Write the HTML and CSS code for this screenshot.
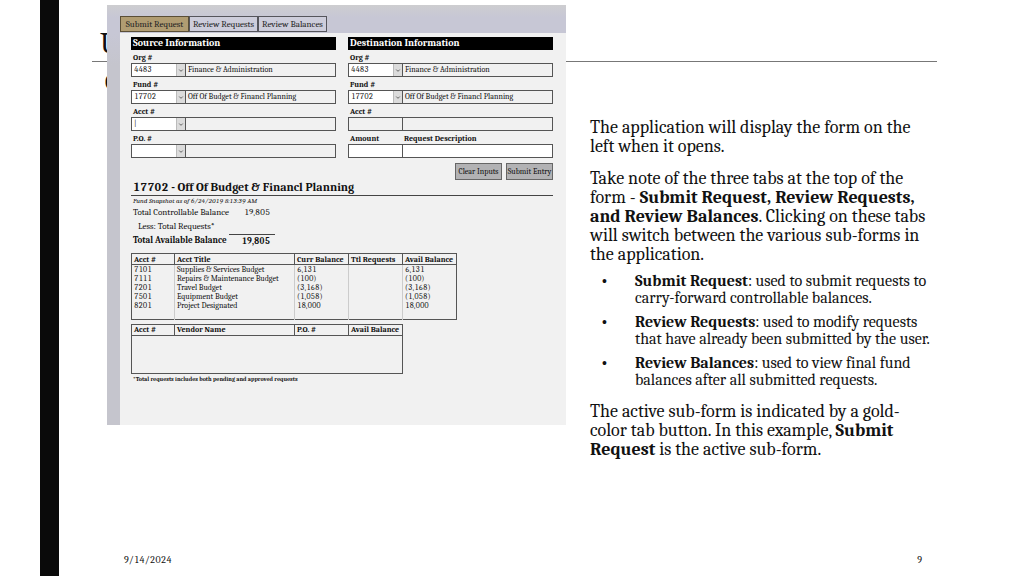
FILE: index.html
```html
<!DOCTYPE html>
<html lang="en">
<head>
<meta charset="utf-8">
<title>Submit Request</title>
<link rel="stylesheet" href="styles.css">
</head>
<body>
<div class="slide">
  <div class="spine"></div>
  <div class="content">
    <header class="title">
      <h1>U</h1>
      <p class="subtitle">C</p>
    </header>

    <section class="app">
      <nav class="tabs">
        <button class="tab active" type="button">Submit Request</button>
        <button class="tab" type="button">Review Requests</button>
        <button class="tab" type="button">Review Balances</button>
      </nav>
      <div class="sheet">
        <form class="transfer">
          <fieldset class="side">
            <legend>Source Information</legend>
            <label for="s-org">Org #</label>
            <div class="field">
              <div class="pick"><select id="s-org"><option>4483</option></select><svg viewBox="0 0 9 12"><path d="M2.5 5.5l2 2 2-2"/></svg></div>
              <output>Finance &amp; Administration</output>
            </div>
            <label for="s-fund">Fund #</label>
            <div class="field">
              <div class="pick"><select id="s-fund"><option>17702</option></select><svg viewBox="0 0 9 12"><path d="M2.5 5.5l2 2 2-2"/></svg></div>
              <output>Off Of Budget &amp; Financl Planning</output>
            </div>
            <label for="s-acct">Acct #</label>
            <div class="field">
              <div class="pick"><select id="s-acct"><option>|</option></select><svg viewBox="0 0 9 12"><path d="M2.5 5.5l2 2 2-2"/></svg></div>
              <output></output>
            </div>
            <label for="s-po">P.O. #</label>
            <div class="field">
              <div class="pick"><select id="s-po"><option></option></select><svg viewBox="0 0 9 12"><path d="M2.5 5.5l2 2 2-2"/></svg></div>
              <output></output>
            </div>
          </fieldset>
          <fieldset class="side">
            <legend>Destination Information</legend>
            <label for="d-org">Org #</label>
            <div class="field">
              <div class="pick"><select id="d-org"><option>4483</option></select><svg viewBox="0 0 9 12"><path d="M2.5 5.5l2 2 2-2"/></svg></div>
              <output>Finance &amp; Administration</output>
            </div>
            <label for="d-fund">Fund #</label>
            <div class="field">
              <div class="pick"><select id="d-fund"><option>17702</option></select><svg viewBox="0 0 9 12"><path d="M2.5 5.5l2 2 2-2"/></svg></div>
              <output>Off Of Budget &amp; Financl Planning</output>
            </div>
            <label for="d-acct">Acct #</label>
            <div class="field">
              <input class="locked" id="d-acct" type="text" readonly>
              <output></output>
            </div>
            <div class="pair"><label for="amount">Amount</label><label for="descr">Request Description</label></div>
            <div class="field">
              <input id="amount" type="text">
              <input id="descr" type="text">
            </div>
          </fieldset>
          <div class="actions">
            <button type="reset">Clear Inputs</button>
            <button type="button">Submit Entry</button>
          </div>
        </form>

        <h2>17702 - Off Of Budget &amp; Financl Planning</h2>
        <p class="snapshot">Fund Snapshot as of 6/24/2019 8:13:39 AM</p>
        <dl class="totals">
          <dt>Total Controllable Balance</dt><dd>19,805</dd>
          <dt class="less">Less: Total Requests*</dt><dd></dd>
          <dt class="sum">Total Available Balance</dt><dd class="sum">19,805</dd>
        </dl>

        <table class="accounts">
          <colgroup><col class="c1"><col class="c2"><col class="c3"><col class="c3"><col class="c3"></colgroup>
          <thead><tr><th>Acct #</th><th>Acct Title</th><th>Curr Balance</th><th>Ttl Requests</th><th>Avail Balance</th></tr></thead>
          <tbody>
            <tr><td>7101</td><td>Supplies &amp; Services Budget</td><td>6,131</td><td></td><td>6,131</td></tr>
            <tr><td>7111</td><td>Repairs &amp; Maintenance Budget</td><td>(100)</td><td></td><td>(100)</td></tr>
            <tr><td>7201</td><td>Travel Budget</td><td>(3,168)</td><td></td><td>(3,168)</td></tr>
            <tr><td>7501</td><td>Equipment Budget</td><td>(1,058)</td><td></td><td>(1,058)</td></tr>
            <tr><td>8201</td><td>Project Designated</td><td>18,000</td><td></td><td>18,000</td></tr>
            <tr><td></td><td></td><td></td><td></td><td></td></tr>
          </tbody>
        </table>
        <table class="vendors">
          <colgroup><col class="c1"><col class="c2"><col class="c3"><col class="c3"></colgroup>
          <thead><tr><th>Acct #</th><th>Vendor Name</th><th>P.O. #</th><th>Avail Balance</th></tr></thead>
          <tbody><tr><td colspan="4"></td></tr></tbody>
        </table>
        <p class="note">*Total requests includes both pending and approved requests</p>
      </div>
    </section>

    <article class="text">
      <p>The application will display the form on the<br>left when it opens.</p>
      <p>Take note of the three tabs at the top of the<br>form - <b>Submit Request, Review Requests,<br>and Review Balances</b>. Clicking on these tabs<br>will switch between the various sub-forms in<br>the application.</p>
      <ul>
        <li><b>Submit Request</b>: used to submit requests to<br>carry-forward controllable balances.</li>
        <li><b>Review Requests</b>: used to modify requests<br>that have already been submitted by the user.</li>
        <li><b>Review Balances</b>: used to view final fund<br>balances after all submitted requests.</li>
      </ul>
      <p>The active sub-form is indicated by a gold-<br>color tab button. In this example, <b>Submit<br>Request</b> is the active sub-form.</p>
    </article>

    <footer><time datetime="2024-09-14">9/14/2024</time><span>9</span></footer>
  </div>
</div>
</body>
</html>
```
FILE: styles.css
```css
* { box-sizing: border-box; }

body {
  margin: 0;
  background: #fff;
  color: #111;
  font-family: Cambria, Caladea, "Liberation Serif", serif;
  font-variant-numeric: lining-nums tabular-nums;
}

h1, h2, p, ul, dl, dd { margin: 0; padding: 0; }
button, select, input { font: inherit; font-variant-numeric: inherit; color: inherit; border-radius: 0; margin: 0; }

.slide {
  display: flex;
  min-height: 100vh;
  padding-left: 40px;
}

.spine { width: 19px; background: #0a0a0a; }

.content {
  flex: 1;
  display: grid;
  grid-template-columns: 15px minmax(0, 459fr) 24px minmax(0, 347fr);
  grid-template-rows: 62px auto 1fr;
  padding: 0 87px 0 33px;
}

/* Title band, partly covered by the application window */
.title { grid-area: 1 / 1 / 2 / -1; border-bottom: 1px solid #777; padding: 26px 0 0 8px; }
.title h1 { font-size: 30px; line-height: 35px; font-weight: 400; }
.title .subtitle { padding: 8px 0 0 5px; font-size: 20px; line-height: 28px; }

/* Application window */
.app {
  grid-area: 1 / 2 / 3 / 3;
  z-index: 1;
  align-self: start;
  margin-top: 5px;
  padding: 11px 0 0 13px;
  background: linear-gradient(#cdcdd0 0, #c7c7d5 12px, #c7c7d5 28px, #c5c5cd 60px);
  font-size: 8px;
}

.tabs { display: flex; padding-bottom: 1px; }
.tab {
  height: 16px;
  width: 69px;
  padding: 0;
  border: 1px solid #55555c;
  background: #cdcddb;
  color: #222;
  font-size: 9px;
  line-height: 12px;
  white-space: nowrap;
}
.tab.active { background: #b09c72; border-color: #5a4e36; }

.sheet { padding: 4px 13px 39px 11px; background: #f1f1f1; }

.transfer { display: grid; grid-template-columns: 1fr 1fr; column-gap: 12px; }
.side { min-width: 0; margin: 0; padding: 0; border: 0; }
.side legend {
  width: 100%;
  height: 13px;
  padding: 0 2px;
  background: #000;
  color: #fff;
  font-size: 10px;
  line-height: 13px;
  font-weight: 700;
}
.side label {
  display: block;
  height: 13px;
  padding-left: 2px;
  line-height: 15px;
  font-weight: 700;
}
.pair { display: grid; grid-template-columns: 54px 1fr; }
.field {
  display: grid;
  grid-template-columns: 54px 1fr;
  height: 14px;
  border: 1px solid #555;
}
.pick { display: grid; grid-template-columns: 1fr 9px; background: #fff; border-right: 1px solid #555; }
.pick select {
  grid-area: 1 / 1 / 2 / 3;
  appearance: none;
  width: 100%;
  height: 12px;
  padding: 0 2px;
  border: 0;
  background: none;
  line-height: 12px;
}
.pick svg { grid-area: 1 / 2; width: 9px; height: 12px; background: #dcdcdc; border-left: 1px solid #bbb; pointer-events: none; }
.pick path { fill: none; stroke: #555; stroke-width: 1; }
.field output { padding-left: 2px; line-height: 12px; white-space: nowrap; }
.field input { width: 100%; height: 12px; padding: 0 2px; border: 0; background: #fff; }
.field input:first-child { border-right: 1px solid #555; }
.field .locked { background: none; }

.actions { grid-column: 1 / -1; display: flex; justify-content: flex-end; gap: 4px; padding-top: 5px; }
.actions button {
  width: 47px;
  height: 17px;
  padding: 0;
  border: 1px solid #666;
  background: #b2b2b4;
  white-space: nowrap;
}

.sheet h2 { padding-left: 2px; border-bottom: 1px solid #444; font-size: 12px; line-height: 15px; }
.snapshot { padding-left: 2px; font-size: 7px; line-height: 10px; font-style: italic; }

.totals { display: grid; grid-template-columns: 98px 46px; row-gap: 1px; padding-bottom: 6px; font-size: 9px; line-height: 13px; }
.totals dt { padding-left: 2px; white-space: nowrap; }
.totals .less { padding-left: 7px; }
.totals dd { padding-right: 5px; text-align: right; }
.totals .sum { font-weight: 700; line-height: 12px; }
.totals dd.sum { border-top: 1px solid #444; }

table { border-collapse: collapse; table-layout: fixed; border: 1px solid #555; }
.accounts { width: 326px; }
.vendors { width: 272px; margin-top: 4px; }
.c1 { width: 43px; }
.c2 { width: 120px; }
.c3 { width: 54px; }
th { height: 11px; padding: 0 2px; border: 1px solid #555; line-height: 9px; text-align: left; white-space: nowrap; }
td { height: 9px; padding: 0 2px; border-right: 1px solid #ccc; line-height: 9px; white-space: nowrap; }
td:last-child { border-right-color: #555; }
.vendors td { height: 38px; }
.note { padding-left: 2px; font-size: 6px; line-height: 12px; font-weight: 700; }

/* Explanatory text */
.text { grid-area: 2 / 4 / 3 / 5; padding-top: 56px; font-size: 18px; line-height: 19px; white-space: nowrap; }
.text p { margin-bottom: 13px; }
.text p:nth-of-type(2) { margin-bottom: 9px; }
.text ul { margin-bottom: 13px; padding-left: 45px; font-size: 16px; line-height: 17px; list-style: none; }
.text li { margin-bottom: 7px; }
.text li::before { content: "•"; float: left; margin-left: -33px; font-family: "Liberation Sans", sans-serif; font-size: 14px; }

footer {
  grid-area: 3 / 1 / 4 / -1;
  align-self: end;
  display: flex;
  justify-content: space-between;
  padding: 0 15px 10px 32px;
  font-size: 10px;
  line-height: 12px;
}
```
